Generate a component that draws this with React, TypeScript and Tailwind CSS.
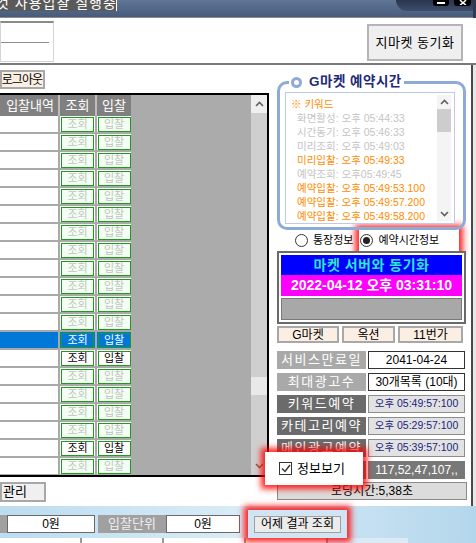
import React from 'react';

const glow = 'shadow-[0_0_6px_4px_rgba(255,0,0,0.85)]';

const logs: [string, boolean][] = [
  ['※ 키워드', true],
  ['화면활성: 오후 05:44:33', false],
  ['시간동기: 오후 05:46:33', false],
  ['미리조회: 오후 05:49:03', false],
  ['미리입찰: 오후 05:49:33', true],
  ['예약조회: 오후05:49:45', false],
  ['예약입찰: 오후 05:49:53.100', true],
  ['예약입찰: 오후 05:49:57.200', true],
  ['예약입찰: 오후 05:49:58.200', true],
];

function Chevron({ up, color = '#606060' }: { up?: boolean; color?: string }) {
  return (
    <svg width="9" height="6" viewBox="0 0 9 6">
      <path d={up ? 'M1 5 L4.5 1.5 L8 5' : 'M1 1 L4.5 4.5 L8 1'} fill="none" stroke={color} strokeWidth="1.6" />
    </svg>
  );
}

function GridRow({ i }: { i: number }) {
  const sel = i === 12;
  const bold = i === 13 || i === 18;
  const cell = sel ? 'bg-[#0078d7]' : 'bg-white';
  const btn = sel
    ? 'bg-[#0078d7] text-white'
    : bold
    ? 'bg-white text-black'
    : 'bg-[#f2fff2] text-[#c2c2c2]';
  return (
    <div className="flex h-[18px] w-[131px] shrink-0 border-b-2 border-[#a9a9a9]">
      <div className={`w-[60px] border-r-2 border-[#a9a9a9] ${cell}`} />
      <div className={`w-[37px] flex items-center justify-center border-r-2 border-[#a9a9a9] ${cell}`}>
        <div className={`w-[33px] h-[15px] border border-[#1f9a1f] text-[11px] leading-none flex items-center justify-center ${btn}`}>조회</div>
      </div>
      <div className={`w-[34px] flex items-center justify-center ${cell}`}>
        <div className={`w-[33px] h-[15px] border border-[#1f9a1f] text-[11px] leading-none flex items-center justify-center ${btn}`}>입찰</div>
      </div>
    </div>
  );
}

function InfoRow({ label, value, dark, kind }: { label: string; value: string; dark?: boolean; kind: 'white' | 'time' | 'dark' }) {
  const v =
    kind === 'white'
      ? 'bg-white border border-[#333] text-black text-[12px]'
      : kind === 'time'
      ? 'bg-[#e2e2e2] border border-[#8c8c8c] text-[#1a237e] text-[10.5px]'
      : 'bg-[#787878] text-white text-[12px]';
  return (
    <div className="flex h-[18px] gap-[2px]">
      <div className={`w-[89px] flex items-center justify-center text-white text-[13px] tracking-[1.5px] ${dark ? 'bg-[#6b6b6b]' : 'bg-[#a9a9a9]'}`}>
        {label}
      </div>
      <div className={`w-[97px] flex items-center justify-center ${v}`}>{value}</div>
    </div>
  );
}

export default function App() {
  return (
    <div className="relative w-[476px] h-[543px] overflow-hidden bg-white font-['Liberation_Sans','Noto_Sans_CJK_KR',sans-serif] text-[12px] text-black">
      {/* title bar */}
      <div className="relative h-[18px] flex bg-gradient-to-b from-[#617596] to-[#475b7c] border-b border-[#8c8c8c]">
        <div className="w-[117px] h-[11px] bg-[#5a5a5a] border-r border-white overflow-hidden">
          <div className="-mt-[6px] -ml-[4px] text-white text-[14px] leading-[18px] whitespace-nowrap tracking-[1px]">것 사용입찰 실행중</div>
        </div>
        <div className="absolute left-[396px] top-0 w-[80px] h-[11px] rounded-bl-[30px] bg-gradient-to-b from-[#2a3650] to-[#3e4d6a]" />
        <div className="absolute left-[433px] -top-[3px] w-[16px] h-[9px] rounded-[3px] bg-black flex items-end justify-center pb-[2px]">
          <div className="w-[8px] h-[2px] bg-white" />
        </div>
        <div className="absolute left-[454px] -top-[3px] w-[17px] h-[9px] rounded-[3px] bg-black flex items-end justify-center pb-[1px]">
          <svg width="8" height="5" viewBox="0 0 8 5">
            <path d="M1 0 L4 3 L7 0 M1 5 L4 3 L7 5" stroke="white" strokeWidth="1.5" fill="none" />
          </svg>
        </div>
        <div className="absolute right-0 top-0 w-[3px] h-[18px] bg-[#2e3a50]" />
      </div>

      {/* header */}
      <div className="h-[47px] flex justify-between border-b-2 border-[#7a7a7a]">
        <div className="mt-[3px] w-[54px] h-[41px] border border-[#d4d4d4] border-t-2 border-t-[#8a8a8a] flex flex-col">
          <div className="mt-[19px] w-[48px] h-[1px] bg-[#8e8e8e]" />
        </div>
        <div className="mt-[6px] mr-[13px] w-[96px] h-[37px] bg-[#efefef] border-2 border-[#b4b4b4] flex items-center justify-center text-[13px] tracking-[0.5px]">
          지마켓 동기화
        </div>
      </div>

      {/* main */}
      <div className="flex h-[441px]">
        {/* left */}
        <div className="w-[270px] flex flex-col">
          <div className="mt-[5px] w-[45px] h-[19px] bg-[#fbefe4] border-2 border-[#a8a8a8] flex items-center justify-end pr-[1px] text-[12px] tracking-[-1px] whitespace-nowrap overflow-hidden">
            로그아웃
          </div>
          <div className="mt-[4px] w-[269px] h-[384px] flex border-y-2 border-r-2 border-black bg-[#ababab] overflow-hidden">
            <div className="flex flex-col w-[131px]">
              <div className="flex h-[21px] shrink-0 bg-[#808080] text-white text-[13px]">
                <div className="w-[60px] flex items-center justify-end pr-[4px] border-r-2 border-[#bdbdbd]">입찰내역</div>
                <div className="w-[37px] flex items-center justify-center border-r-2 border-[#bdbdbd]">조회</div>
                <div className="w-[34px] flex items-center justify-center">입찰</div>
              </div>
              {Array.from({ length: 20 }, (_, i) => (
                <GridRow key={i} i={i} />
              ))}
            </div>
            <div className="flex-1" />
            <div className="w-[16px] flex flex-col bg-[#cfcfcf]">
              <div className="h-[18px] bg-[#efefef] flex items-center justify-center">
                <Chevron up />
              </div>
              <div className="flex-1" />
              <div className="h-[18px] bg-[#e9e9e9]" />
              <div className="h-[62px]" />
              <div className="h-[18px] flex items-center justify-center">
                <Chevron color="#8a5a4a" />
              </div>
            </div>
          </div>
          <div className="mt-[5px] w-[46px] h-[20px] bg-[#f0f0f0] border-2 border-[#a8a8a8] flex items-center pl-[1px] text-[13px]">
            관리
          </div>
        </div>

        {/* right */}
        <div className="relative w-[203px] flex flex-col pl-[7px] border-r-2 border-[#4a4a4a]">
          {/* group box */}
          <div className="relative mt-[16px] w-[189px] h-[149px] border-[3px] border-[#8eaad8] rounded-[10px] pt-[8px] pl-[5px] pr-[8px] pb-[3px]">
            <div className="absolute -top-[11px] left-[9px] flex items-center gap-[7px] bg-white px-[2px] h-[18px]">
              <div className="w-[11px] h-[11px] rounded-full border-[3px] border-[#8eaad8] bg-white" />
              <div className="text-[#1f2a7a] font-bold text-[13.5px] tracking-[0.5px] whitespace-nowrap">G마켓 예약시간</div>
            </div>
            <div className="h-full flex border border-[#bccbe8] bg-white overflow-hidden">
              <div className="flex-1 pt-[4px] pl-[5px] text-[10.5px] leading-[14px] whitespace-nowrap overflow-hidden">
                {logs.map(([t, hot], i) => (
                  <div key={i} className={`${i > 0 ? 'ml-[6px]' : ''} ${hot ? 'text-[#ff8c00]' : 'text-[#c4c4c4]'}`}>
                    {t}
                  </div>
                ))}
              </div>
              <div className="w-[14px] mr-[3px] my-[2px] flex flex-col bg-[#f4f4f4]">
                <div className="h-[14px] flex items-center justify-center">
                  <Chevron up />
                </div>
                <div className="h-[23px] bg-[#cdcdcd]" />
                <div className="flex-1" />
                <div className="h-[14px] flex items-center justify-center">
                  <Chevron />
                </div>
              </div>
            </div>
          </div>

          {/* radios */}
          <div className="h-[21px] flex items-center">
            <div className="ml-[18px] w-[13px] h-[13px] rounded-full border border-[#333] bg-white" />
            <div className="ml-[5px] text-[11px] whitespace-nowrap">통장정보</div>
            <div className={`ml-[6px] w-[100px] h-[24px] bg-white flex items-center pl-[1px] ${glow}`}>
              <div className="w-[13px] h-[13px] rounded-full border border-[#333] bg-white flex items-center justify-center">
                <div className="w-[7px] h-[7px] rounded-full bg-[#222]" />
              </div>
              <div className="ml-[5px] text-[11px] whitespace-nowrap">예약시간정보</div>
            </div>
          </div>

          {/* sync frame */}
          <div className="relative z-10 w-[189px] h-[73px] border-2 border-[#6a6a6a] bg-white p-[2px] flex flex-col">
            <div className="h-[20px] bg-[#0000ff] text-[#2ee6d6] font-bold text-[14px] flex items-center justify-center tracking-[0.5px]">
              마켓 서버와 동기화
            </div>
            <div className="h-[21px] bg-[#ff00ff] text-white font-bold text-[14px] flex items-center justify-center">
              2022-04-12 오후 03:31:10
            </div>
            <div className="mt-[2px] flex-1 bg-[#a8a8a8] border border-[#7a7a7a]" />
          </div>

          {/* market buttons */}
          <div className="mt-[2px] h-[17px] flex gap-[3px] text-[12px]">
            <div className="w-[62px] bg-[#fbefe4] border-2 border-[#a8a8a8] flex items-center justify-center">G마켓</div>
            <div className="w-[53px] bg-[#fbefe4] border-2 border-[#a8a8a8] flex items-center justify-center">옥션</div>
            <div className="w-[65px] bg-[#fbefe4] border-2 border-[#a8a8a8] flex items-center justify-center">11번가</div>
          </div>

          {/* info */}
          <div className="mt-[8px] flex flex-col gap-[4px]">
            <InfoRow label="서비스만료일" value="2041-04-24" kind="white" />
            <InfoRow label="최대광고수" value="30개목록 (10대)" kind="white" />
            <InfoRow label="키워드예약" value="오후 05:49:57:100" kind="time" dark />
            <InfoRow label="카테고리예약" value="오후 05:29:57:100" kind="time" dark />
            <InfoRow label="메인광고예약" value="오후 05:39:57:100" kind="time" dark />
            <InfoRow label="" value="117,52,47,107,," kind="dark" dark />
          </div>
          <div className="mt-[3px] w-[190px] h-[18px] bg-[#dcdcdc] border border-[#8a8a8a] flex items-center justify-center text-[12px]">
            로딩시간:5,38초
          </div>

          {/* 정보보기 overlay */}
          <div className={`absolute left-[-5px] top-[387px] w-[98px] h-[33px] bg-white flex items-center pl-[14px] ${glow}`}>
            <div className="w-[13px] h-[13px] border border-[#333] bg-white flex items-center justify-center">
              <svg width="10" height="9" viewBox="0 0 10 9">
                <path d="M1 4.5 L4 7.5 L9 1" fill="none" stroke="#333" strokeWidth="1.4" />
              </svg>
            </div>
            <div className="ml-[5px] text-[13px]">정보보기</div>
          </div>
        </div>
        <div className="flex-1 bg-[#e8e8e8]" />
      </div>

      {/* bottom strip */}
      <div className="h-[37px] bg-gradient-to-r from-[#bcdcef] via-[#d9ecf7] to-[#b4d6ec] pt-[4px] flex flex-col">
        <div className="h-[28px] flex items-center">
          <div className="w-[7px] h-[18px] bg-[#a0a0a0]" />
          <div className="w-[88px] h-[18px] bg-white border border-[#6a6a6a] flex items-center justify-center">0원</div>
          <div className="ml-[3px] w-[68px] h-[18px] bg-[#a0a0a0] text-[#eeeeee] flex items-center justify-center text-[13px]">입찰단위</div>
          <div className="w-[74px] h-[18px] bg-white border border-[#6a6a6a] flex items-center justify-center">0원</div>
          <div className={`relative z-10 ml-[8px] w-[99px] h-[28px] bg-[#cfe5f3] flex items-center justify-center ${glow}`}>
            <div className="w-[87px] h-[17px] bg-[#ebebeb] border border-[#a0a0a0] flex items-center justify-center text-[12px] whitespace-nowrap">
              어제 결과 조회
            </div>
          </div>
        </div>
        <div className="flex h-[8px] gap-[2px] bg-[#9a9a9a] w-[408px]">
          <div className="w-[80px] bg-white" />
          <div className="w-[80px] bg-white" />
          <div className="w-[80px] bg-white" />
          <div className="w-[80px] bg-white" />
          <div className="flex-1 bg-[#dbeaf5]" />
        </div>
      </div>
    </div>
  );
}
